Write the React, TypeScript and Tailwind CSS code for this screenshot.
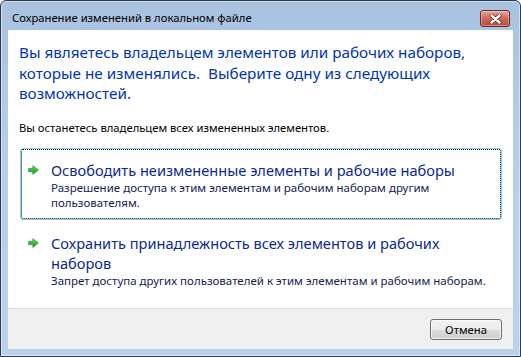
import React from "react";

const GreenArrow = () => (
  <svg width="11" height="10" viewBox="0 0 11 10" className="shrink-0">
    <defs>
      <linearGradient id="ga" x1="0" y1="0" x2="0" y2="1">
        <stop offset="0" stopColor="#6ae05e" />
        <stop offset="1" stopColor="#12941c" />
      </linearGradient>
    </defs>
    <path
      d="M0.6 3.3H4.8V0.6L10.4 5 4.8 9.4V6.7H0.6Z"
      fill="url(#ga)"
      stroke="#23892a"
      strokeWidth="0.6"
      strokeLinejoin="round"
    />
  </svg>
);

interface CommandLinkProps {
  title: React.ReactNode;
  note: React.ReactNode;
  focused?: boolean;
}

const CommandLink: React.FC<CommandLinkProps> = ({ title, note, focused }) => (
  <div
    className={
      focused
        ? "flex gap-[12px] rounded-[3px] border border-[#86d2f4] pt-[11px] pb-[9px] pl-[7px] outline-1 outline-dotted outline-black -outline-offset-2"
        : "flex gap-[12px] rounded-[3px] border border-transparent pt-[11px] pb-[7px] pl-[7px]"
    }
  >
    <div className="flex h-[20px] items-center pt-[1px]">
      <GreenArrow />
    </div>
    <div className="flex flex-col">
      <p className="text-[14.6px] leading-[20px] text-[#0c2a8e]">{title}</p>
      <p className="text-[11.5px] leading-[15px] text-[#151c55]">{note}</p>
    </div>
  </div>
);

export default function App() {
  return (
    <div className="flex h-[357px] w-[521px] flex-col overflow-hidden rounded-t-[6px] border border-[#2c3d52] bg-gradient-to-b from-[#a8c2e0] via-[#b8d0ea] to-[#b9d1ea] font-['Noto_Sans','Open_Sans',sans-serif] shadow-[inset_0_0_0_1px_rgba(255,255,255,0.45)]">
      <div className="flex h-[29px] shrink-0 items-start justify-between pt-[9px] pr-[10px] pl-[11px]">
        <span className="text-[11.25px] leading-[15px] text-black">
          Сохранение изменений в локальном файле
        </span>
        <button className="flex h-[17px] w-[30px] items-center justify-center rounded-[3px] border border-[#6b2a20] bg-gradient-to-b from-[#e3a89c] via-[#d0675a] to-[#c14a3a] shadow-[inset_0_0_0_1px_rgba(255,255,255,0.35)]">
          <svg width="13" height="10" viewBox="0 0 13 10">
            <path d="M2.5 1.5l8 7M10.5 1.5l-8 7" stroke="#5a2018" strokeWidth="4" strokeLinecap="round" />
            <path d="M2.5 1.5l8 7M10.5 1.5l-8 7" stroke="#ffffff" strokeWidth="2.6" strokeLinecap="round" />
          </svg>
        </button>
      </div>

      <div className="mx-[7px] mb-[7px] flex flex-1 flex-col bg-white">
        <div className="flex flex-1 flex-col px-[11px] pt-[12px]">
          <h1 className="text-[15.25px] leading-[20.5px] text-[#0036b0]">
            Вы являетесь владельцем элементов или рабочих наборов,
            <br />
            которые не изменялись.&nbsp; Выберите одну из следующих
            <br />
            возможностей.
          </h1>
          <p className="mt-[16px] text-[11.25px] leading-[15px] text-black">
            Вы останетесь владельцем всех измененных элементов.
          </p>

          <div className="mt-[13px] ml-[1px] flex flex-col gap-[1px]">
            <CommandLink
              focused
              title="Освободить неизмененные элементы и рабочие наборы"
              note={
                <>
                  Разрешение доступа к этим элементам и рабочим наборам другим
                  <br />
                  пользователям.
                </>
              }
            />
            <CommandLink
              title={
                <>
                  Сохранить принадлежность всех элементов и рабочих
                  <br />
                  наборов
                </>
              }
              note="Запрет доступа других пользователей к этим элементам и рабочим наборам."
            />
          </div>
        </div>

        <div className="flex h-[41px] shrink-0 items-center justify-end border-t border-[#dfdfdf] bg-[#f0f0f0] pr-[11px]">
          <button className="h-[21px] w-[72px] rounded-[3px] border border-[#707070] bg-[linear-gradient(to_bottom,#f2f2f2_0%,#ebebeb_50%,#dddddd_50%,#cfcfcf_100%)] text-[11.25px] leading-[15px] text-black shadow-[inset_0_0_0_1px_rgba(255,255,255,0.7)]">
            Отмена
          </button>
        </div>
      </div>
    </div>
  );
}
